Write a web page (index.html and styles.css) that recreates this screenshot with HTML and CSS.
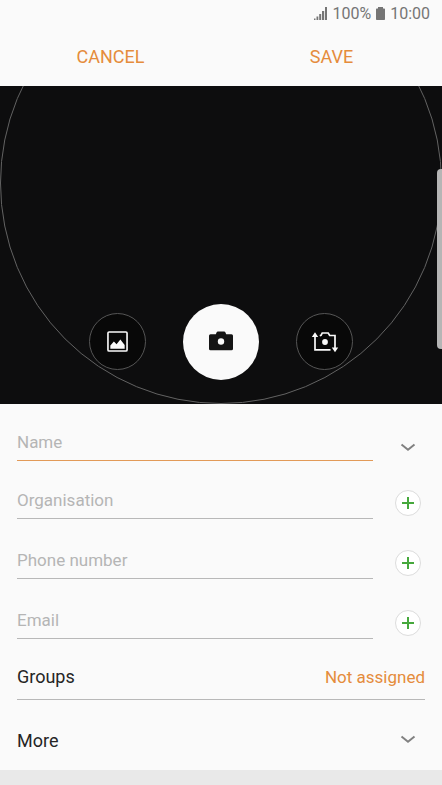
FILE: index.html
```html
<!DOCTYPE html>
<html lang="en">
<head>
<meta charset="utf-8">
<meta name="viewport" content="width=device-width, initial-scale=1">
<title>New contact</title>
<link rel="stylesheet" href="styles.css">
</head>
<body>
<header>
  <div class="status">
    <svg class="signal" width="13" height="13" viewBox="0 0 13 13" aria-hidden="true"><path d="M0 11.500h1.500V13H0zM2.500 9.500h1.800V13H2.500zM5.200 7H7.200v6H5.200zM8 4h2.200v9H8zM11 0h2v13h-2z"/></svg>
    <span>100%</span>
    <svg class="battery" width="9" height="13" viewBox="0 0 9 13" aria-hidden="true"><path d="M2 0h5v1.500H8.300q.7 0 .7.700v10q0 .8-.8.800H.8Q0 13 0 12.200v-10q0-.7.700-.7H2z"/></svg>
    <span>10:00</span>
  </div>
  <div class="actions">
    <button type="button">CANCEL</button>
    <button type="submit" form="contact">SAVE</button>
  </div>
</header>

<section class="camera" aria-label="Contact photo">
  <div class="ring"></div>
  <button type="button" class="round" aria-label="Choose from gallery">
    <svg width="21" height="21" viewBox="0 0 22 22"><rect x="1" y="1" width="20" height="20" rx="1.200" fill="none" stroke="#fafafa" stroke-width="1.700"/><path d="M3.500 18.500v-3.200l3.700-4.300 2.800 2.800 4-4.800 4.500 5.600v3.900z" fill="#fafafa"/></svg>
  </button>
  <button type="button" class="round shutter" aria-label="Take photo">
    <svg width="24" height="22" viewBox="0 0 24 22"><path d="M1.500 3.300h5.300l1-2.300q.3-.6 1-.6h6.400q.7 0 1 .6l1 2.300h5.300q1.500 0 1.500 1.500v13q0 1.500-1.500 1.500h-21Q0 19.300 0 17.800v-13q0-1.500 1.500-1.500z" fill="#151515"/><circle cx="12" cy="10.500" r="3.200" fill="#fafafa"/></svg>
  </button>
  <button type="button" class="round" aria-label="Switch camera">
    <svg width="28" height="22" viewBox="0 0 28 22"><g fill="none" stroke="#fafafa" stroke-width="1.700"><path d="M4 4.500v14.300h15.500"/><path d="M8.800 4.800l1.200-.5 1.200-2.300h6l1.500 2.500h5.300V17"/></g><path d="M.8 6L4 1.200 7.200 6zM20.800 16.500h6.400L24 21.300z" fill="#fafafa"/><circle cx="14" cy="11" r="2.900" fill="#fafafa"/></svg>
  </button>
  <div class="edge"></div>
</section>

<form id="contact">
  <div class="field active">
    <input type="text" placeholder="Name" aria-label="Name">
    <button type="button" class="side" aria-label="Show name fields"><svg width="26" height="26" viewBox="0 0 26 26"><path d="M6.500 12.500l6.500 5.300 6.500-5.300" fill="none" stroke="#808080" stroke-width="2"/></svg></button>
  </div>
  <div class="field">
    <input type="text" placeholder="Organisation" aria-label="Organisation">
    <button type="button" class="side add" aria-label="Add organisation"><svg width="14" height="14" viewBox="0 0 14 14"><path d="M7 1v12M1 7h12" stroke="#46a83c" stroke-width="2"/></svg></button>
  </div>
  <div class="field tall">
    <input type="tel" placeholder="Phone number" aria-label="Phone number">
    <button type="button" class="side add" aria-label="Add phone number"><svg width="14" height="14" viewBox="0 0 14 14"><path d="M7 1v12M1 7h12" stroke="#46a83c" stroke-width="2"/></svg></button>
  </div>
  <div class="field tall">
    <input type="email" placeholder="Email" aria-label="Email">
    <button type="button" class="side add" aria-label="Add email"><svg width="14" height="14" viewBox="0 0 14 14"><path d="M7 1v12M1 7h12" stroke="#46a83c" stroke-width="2"/></svg></button>
  </div>
  <button type="button" class="row groups"><span>Groups</span><span class="value">Not assigned</span></button>
  <button type="button" class="row more"><span>More</span><svg width="26" height="26" viewBox="0 0 26 26" aria-hidden="true"><path d="M6.500 9.500l6.500 5.300 6.500-5.300" fill="none" stroke="#808080" stroke-width="2"/></svg></button>
</form>
</body>
</html>
```
FILE: styles.css
```css
* {
  box-sizing: border-box;
}

body {
  margin: 0;
  min-height: 100vh;
  background: #e9e9e9;
  color: #252525;
  font-family: Roboto, "Liberation Sans", sans-serif;
  font-size: 18px;
}

button,
input {
  padding: 0;
  border: 0;
  border-radius: 0;
  background: none;
  color: inherit;
  font: inherit;
}

svg {
  display: block;
  flex: none;
}

header {
  background: #fafafa;
}

.status {
  display: flex;
  justify-content: flex-end;
  align-items: center;
  gap: 5px;
  height: 26px;
  padding: 0 12px;
  color: #757575;
  font-size: 16px;
}

.signal,
.battery {
  fill: #757575;
}

.actions {
  display: grid;
  grid-template-columns: 1fr 1fr;
  height: 60px;
}

.actions button {
  color: #e58c3c;
}

.camera {
  position: relative;
  display: flex;
  justify-content: center;
  align-items: center;
  gap: 37px;
  height: 318px;
  padding-top: 193px;
  overflow: hidden;
  background: #0d0d0e;
}

.ring {
  position: absolute;
  bottom: 0;
  left: 0;
  width: 100%;
  aspect-ratio: 1;
  border: 1px solid #626262;
  border-radius: 50%;
}

.edge {
  position: absolute;
  top: 83px;
  right: 0;
  width: 5px;
  height: 180px;
  border-radius: 4px 0 0 4px;
  background: #b5b5b5;
}

.round {
  position: relative;
  display: flex;
  justify-content: center;
  align-items: center;
  width: 57px;
  height: 57px;
  border: 1px solid #555;
  border-radius: 50%;
  background: #080808;
}

.shutter {
  width: 76px;
  height: 76px;
  border: 0;
  background: #fafafa;
}

form {
  padding: 0 17px;
  background: #fafafa;
}

.field {
  display: flex;
  align-items: flex-end;
  gap: 22px;
  height: 58px;
  padding-right: 4px;
}

.active {
  height: 57px;
}

.tall {
  height: 60px;
}

.field input {
  flex: 1;
  min-width: 0;
  height: 38px;
  border-bottom: 1px solid #b8b8b8;
  outline: 0;
  font-size: 17px;
}

.active input {
  border-color: #e29a58;
}

.field input::placeholder {
  color: #b5b5b5;
  opacity: 1;
}

.side {
  display: flex;
  justify-content: center;
  align-items: center;
  width: 26px;
  height: 26px;
  margin-bottom: 3px;
}

.add {
  border: 1px solid #dcdcdc;
  border-radius: 50%;
  background: #fff;
}

.row {
  display: flex;
  justify-content: space-between;
  align-items: center;
  width: 100%;
  text-align: left;
}

.groups {
  height: 61px;
  padding-top: 15px;
  border-bottom: 1px solid #b8b8b8;
}

.value {
  color: #e58c3c;
  font-size: 17px;
}

.more {
  height: 70px;
  padding-top: 10px;
  padding-right: 4px;
}
```
